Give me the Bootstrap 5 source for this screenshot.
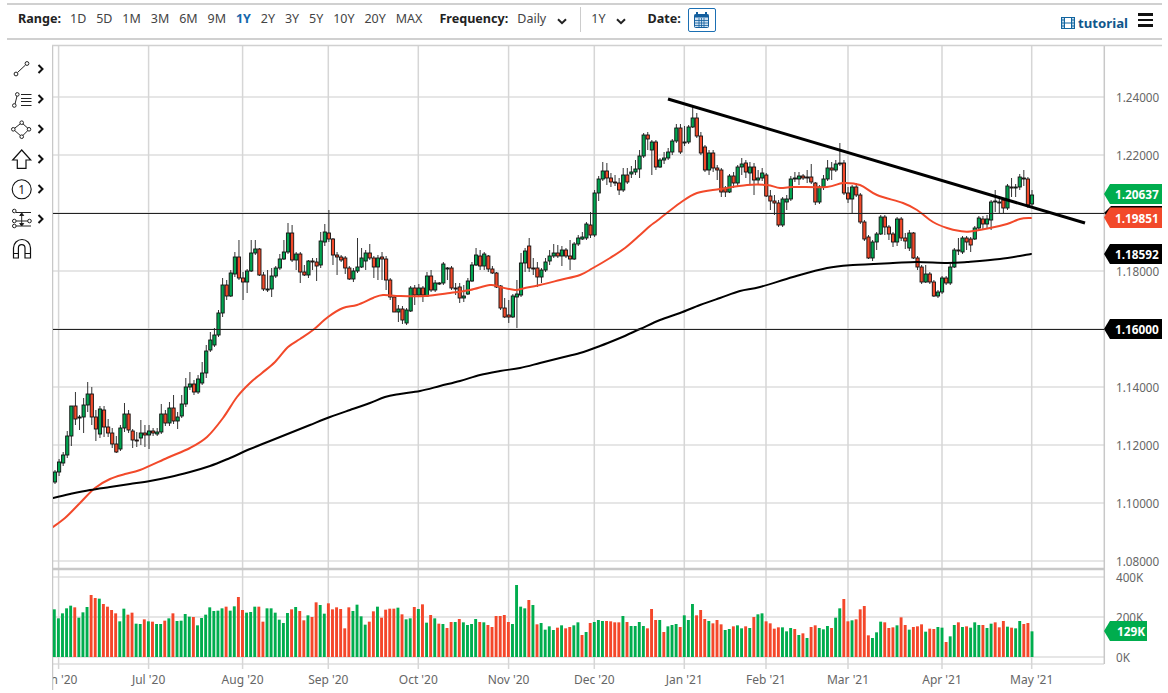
<!DOCTYPE html>
<html lang="en">
<head>
<meta charset="utf-8">
<title>Chart</title>
<link rel="stylesheet" href="https://cdn.jsdelivr.net/npm/bootstrap@5.3.0/dist/css/bootstrap.min.css">
<style>
html,body{background:#fff;margin:0;overflow:hidden;height:693px}
body{font-family:"Noto Sans","Open Sans",sans-serif;color:#333}
.top-strip{margin:3px 6px 0 7px;height:37px;border-top:2px solid #d0d0d0;border-bottom:2px solid #d0d0d0;padding:0 9px 4px 11px;font-size:12.5px;line-height:1}
.lbl{font-weight:700;font-size:12.6px;color:#222}
.rng-list{gap:9.9px;margin-left:9px}
.rng-item{color:#444;text-decoration:none}
.rng-item.is-on{color:#1668ad;font-weight:700}
.freq-lbl{margin-left:17px}
.freq-val{margin-left:9px;color:#444}
.chev{margin-left:11px;display:block;margin-top:3px}
.sep-v{width:1px;height:25px;background:#ccc;margin:0 10px 0 13px}
.date-lbl{margin-left:21px}
.cal-btn{width:28px;height:24px;border:1px solid #1b6fb3;border-radius:2px;margin-left:7px;padding:0;background:#fff;line-height:1}
.tut-link{color:#11578c;font-weight:700;font-size:13.2px;text-decoration:none;margin-top:8px;gap:3px}
.burger{margin-left:10px;width:15px;gap:3px;margin-top:1px}
.burger i{display:block;height:2.4px;background:#111}
.tool-col{width:52px;flex:none;padding-top:10px}
.tool-row{height:30px;padding-left:10px;gap:3px}
.tool-row svg{display:block}
.plot{display:block;flex:none}
.plot text{font-family:"Noto Sans","Open Sans",sans-serif}
.ax{font-size:11.7px;fill:#666;dominant-baseline:central}
.xl{font-size:12px;fill:#666;text-anchor:middle;dominant-baseline:central}
.tg{font-size:11.8px;font-weight:700;fill:#fff;dominant-baseline:central}
</style>
</head>
<body>
<header class="top-strip d-flex align-items-center">
  <span class="lbl">Range:</span>
  <nav class="rng-list d-flex align-items-center">
    <a class="rng-item" href="#">1D</a><a class="rng-item" href="#">5D</a><a class="rng-item" href="#">1M</a><a class="rng-item" href="#">3M</a><a class="rng-item" href="#">6M</a><a class="rng-item" href="#">9M</a><a class="rng-item is-on" href="#">1Y</a><a class="rng-item" href="#">2Y</a><a class="rng-item" href="#">3Y</a><a class="rng-item" href="#">5Y</a><a class="rng-item" href="#">10Y</a><a class="rng-item" href="#">20Y</a><a class="rng-item" href="#">MAX</a>
  </nav>
  <span class="lbl freq-lbl">Frequency:</span>
  <span class="freq-val">Daily</span>
  <svg class="chev" width="10" height="7" viewBox="0 0 10 7"><path d="M1 1.2 5 5.2 9 1.2" fill="none" stroke="#222" stroke-width="2"/></svg>
  <span class="sep-v"></span>
  <span class="freq-val m-0">1Y</span>
  <svg class="chev" width="10" height="7" viewBox="0 0 10 7"><path d="M1 1.2 5 5.2 9 1.2" fill="none" stroke="#222" stroke-width="2"/></svg>
  <span class="lbl date-lbl">Date:</span>
  <button class="cal-btn d-flex align-items-center justify-content-center" type="button" aria-label="Date">
    <svg width="15" height="16" viewBox="0 0 15 16"><rect x=".5" y="2.5" width="14" height="13" rx="1" fill="#cfe1f1" stroke="#145f9e"/><rect x=".5" y="2.5" width="14" height="3" fill="#145f9e"/><path d="M3 0v4M12 0v4" stroke="#145f9e" stroke-width="2"/><path d="M5 6v9M7.5 6v9M10 6v9M1 8.5h13M1 11h13M1 13.5h13" stroke="#145f9e" stroke-width=".8" fill="none"/></svg>
  </button>
  <a class="tut-link ms-auto d-flex align-items-center" href="#">
    <svg width="14" height="12" viewBox="0 0 14 12"><rect x=".5" y=".5" width="13" height="11" fill="#bcd6ea" stroke="#11649f"/><rect x="3.5" y=".5" width="7" height="11" fill="#fff" stroke="#11649f"/><path d="M3.5 6h7M.5 3h3M.5 6h3M.5 9h3M10.5 3h3M10.5 6h3M10.5 9h3" stroke="#11649f"/></svg>
    <span>tutorial</span>
  </a>
  <span class="burger d-flex flex-column"><i></i><i></i><i></i></span>
</header>
<main class="d-flex mt-1">
  <aside class="tool-col d-flex flex-column">
    <div class="tool-row d-flex align-items-center"><svg width="24" height="24" viewBox="0 0 24 24" fill="#fff" stroke="#222"><path d="M7.5 15.5 15.5 8"/><circle cx="6" cy="17" r="1.9"/><circle cx="17" cy="6.5" r="1.9"/></svg><svg width="7" height="10" viewBox="0 0 7 10"><path d="M1.5 1 5.5 5 1.5 9" fill="none" stroke="#111" stroke-width="2"/></svg></div>
    <div class="tool-row d-flex align-items-center"><svg width="24" height="24" viewBox="0 0 24 24" fill="#fff" stroke="#222"><path d="M5 17 7 9M11 7.5h10.5M11 11.5h10.5M11 14.5h10.5M11 18.5h10.5"/><circle cx="4.3" cy="18.5" r="1.8"/><circle cx="7.3" cy="7.4" r="1.8"/></svg><svg width="7" height="10" viewBox="0 0 7 10"><path d="M1.5 1 5.5 5 1.5 9" fill="none" stroke="#111" stroke-width="2"/></svg></div>
    <div class="tool-row d-flex align-items-center"><svg width="24" height="24" viewBox="0 0 24 24" fill="#fff" stroke="#222"><path d="M11.7 5.7 19 12.3 11.7 19.7 3.3 12.3Z"/><circle cx="11.7" cy="5.7" r="1.8"/><circle cx="3.3" cy="12.3" r="1.8"/><circle cx="19" cy="12.3" r="1.8"/><circle cx="11.7" cy="19.7" r="1.8"/></svg><svg width="7" height="10" viewBox="0 0 7 10"><path d="M1.5 1 5.5 5 1.5 9" fill="none" stroke="#111" stroke-width="2"/></svg></div>
    <div class="tool-row d-flex align-items-center"><svg width="24" height="24" viewBox="0 0 24 24" fill="#fff" stroke="#111" stroke-width="1.2"><path d="M11.7 3 2.7 13H7.3V21.3H16V13H20.7Z"/></svg><svg width="7" height="10" viewBox="0 0 7 10"><path d="M1.5 1 5.5 5 1.5 9" fill="none" stroke="#111" stroke-width="2"/></svg></div>
    <div class="tool-row d-flex align-items-center"><svg width="24" height="24" viewBox="0 0 24 24"><circle cx="11.7" cy="12.3" r="9.5" fill="#fff" stroke="#111" stroke-width="1.1"/><text x="11.7" y="16.5" font-size="12" text-anchor="middle" fill="#222">1</text></svg><svg width="7" height="10" viewBox="0 0 7 10"><path d="M1.5 1 5.5 5 1.5 9" fill="none" stroke="#111" stroke-width="2"/></svg></div>
    <div class="tool-row d-flex align-items-center"><svg width="24" height="24" viewBox="0 0 24 24" fill="#fff" stroke="#222"><path d="M6 5.5H21M6 19H21M6 14H18"/><path d="M11.7 7V18"/><path d="M9.7 8.5 11.7 6 13.7 8.5ZM9.7 16.5 11.7 19 13.7 16.5Z" fill="#111"/><circle cx="4.3" cy="4" r="1.8"/><circle cx="4.3" cy="14" r="1.8"/><circle cx="4.3" cy="19" r="1.8"/><circle cx="19.5" cy="14" r="1.8"/></svg><svg width="7" height="10" viewBox="0 0 7 10"><path d="M1.5 1 5.5 5 1.5 9" fill="none" stroke="#111" stroke-width="2"/></svg></div>
    <div class="tool-row d-flex align-items-center"><svg width="24" height="24" viewBox="0 0 24 24" fill="#fff" stroke="#111" stroke-width="1.2"><path d="M3.5 21V11a8.5 8.5 0 0 1 17 0V21H15V11a3.3 3.3 0 0 0-6.6 0V21ZM3.5 16.5H8.4M15 16.5H20.5"/></svg></div>
  </aside>
  <svg class="plot" id="plot" width="1116" height="649" viewBox="52 44 1116 649" xmlns="http://www.w3.org/2000/svg">
    <defs><clipPath id="clipL"><rect x="53" y="44" width="1115" height="649"/></clipPath></defs>
    <g id="gridG"></g>
    <g id="volG"></g>
    <g id="candG" clip-path="url(#clipL)"></g>
    <g id="lineG" clip-path="url(#clipL)"></g>
    <g clip-path="url(#clipL)">
      <text class="xl" x="58.6" y="679">Jun '20</text><text class="xl" x="148.6" y="679">Jul '20</text><text class="xl" x="242.6" y="679">Aug '20</text><text class="xl" x="328.3" y="679">Sep '20</text><text class="xl" x="418.3" y="679">Oct '20</text><text class="xl" x="508.6" y="679">Nov '20</text><text class="xl" x="594.3" y="679">Dec '20</text><text class="xl" x="684.3" y="679">Jan '21</text><text class="xl" x="766" y="679">Feb '21</text><text class="xl" x="848" y="679">Mar '21</text><text class="xl" x="942" y="679">Apr '21</text><text class="xl" x="1031.7" y="679">May '21</text>
    </g>
    <text class="ax" x="1116" y="97">1.24000</text><text class="ax" x="1116" y="155">1.22000</text><text class="ax" x="1116" y="271">1.18000</text><text class="ax" x="1116" y="387">1.14000</text><text class="ax" x="1116" y="445">1.12000</text><text class="ax" x="1116" y="503">1.10000</text><text class="ax" x="1116" y="561">1.08000</text><text class="ax" x="1116" y="577">400K</text><text class="ax" x="1116" y="617">200K</text><text class="ax" x="1116" y="657">0K</text>
    <path d="M1104 213 1111 206H1162V220H1111Z" fill="#000"/>
    <path d="M1104 217.500 1110 207.500H1162V228H1110Z" fill="#f2492a"/>
    <path d="M1104 194 1110 184H1162V204H1110Z" fill="#00ad4e"/>
    <path d="M1104 254 1110 244H1162V264H1110Z" fill="#000"/>
    <path d="M1104 329 1110 319H1162V339H1110Z" fill="#000"/>
    <path d="M1104 631 1110 621H1147V641H1110Z" fill="#00ad4e"/>
    <text class="tg" x="1115" y="194">1.20637</text><text class="tg" x="1115" y="217.500">1.19851</text><text class="tg" x="1115" y="254">1.18592</text><text class="tg" x="1115" y="329">1.16000</text><text class="tg" x="1117" y="631">129K</text>
  </svg>
</main>
<script src="https://cdn.jsdelivr.net/npm/bootstrap@5.3.0/dist/js/bootstrap.bundle.min.js"></script>
<script>
(function(){
var G='#00a651',R='#f2492a',VG='#00ad4e',VR='#f4472a';
var grid='';
[97,155,213,271,329,387,445,503,561,577,617,657,664].forEach(function(y){grid+='<line x1="53" x2="1104" y1="'+y+'" y2="'+y+'" stroke="#e6e6e6" stroke-width="2"/>';});
[58.6,148.6,242.6,328.3,418.3,508.6,594.3,684.3,766,848,942,1031.7].forEach(function(x){grid+='<line x1="'+x+'" x2="'+x+'" y1="45" y2="669" stroke="#d6d6d6" stroke-width="1.5"/>';});
grid+='<line x1="52.500" x2="52.500" y1="45" y2="690" stroke="#c8c8c8" stroke-width="1.5"/>';
grid+='<line x1="1104.300" x2="1104.300" y1="45" y2="664" stroke="#c8c8c8" stroke-width="1.5"/>';
grid+='<line x1="52" x2="1162" y1="45.500" y2="45.500" stroke="#d0d0d0" stroke-width="1.5"/>';
grid+='<line x1="52" x2="1104" y1="569" y2="569" stroke="#c8c8c8" stroke-width="2.5"/>';
document.getElementById('gridG').innerHTML=grid;

var c="g472-482/470,484 g462-472/459,476 g455-463/452,466 g436-455/431,458 g406-436/406,446 r406-419/392,425 g417-418/415,430 g405-417/398,433 g394-405/382,412 r394-417/387,425 r417-429/410,441 g409-434/406,438 r410-427/406,437 r427-433/419,437 r433-444/428,448 r444-452/436,453 g428-449/425,451 g414-428/403,432 r414-430/410,433 r431-440/429,448 r440-441/432,447 g433-438/420,445 r433-435/425,447 g431-435/425,449 r431-433/428,436 g432-434/428,436 g414-432/404,434 r414-423/410,426 g408-423/402,426 r408-421/395,424 g417-421/412,429 g404-416/395,418 g387-404/378,407 g384-387/372,390 r384-392/380,395 g379-392/375,394 g373-383/362,385 g351-373/345,378 g340-350/332,352 g335-345/328,347 "+
"g313-335/310,337 g285-313/278,317 r285-296/280,300 g273-296/270,297 g257-274/252,277 r257-278/240,280 r278-282/272,300 g271-282/269,293 g253-271/240,272 g249-253/240,255 r249-275/248,276 r275-289/272,291 g289-290/270,292 g276-289/268,297 g268-276/266,278 g259-268/254,270 g252-259/240,260 g233-252/223,254 r233-260/225,262 g254-260/252,270 r254-272/252,283 r272-275/265,276 g261-275/260,278 r261-262/258,270 r262-266/258,281 g241-265/232,268 g232-242/224,246 r233-239/210,242 r239-255/238,265 r255-257/252,275 r257-260/255,262 r258-268/256,274 r268-279/266,280 g271-279/268,282 g267-271/238,273 g258-267/248,268 g253-261/250,270 r253-258/244,260 r258-267/256,278 g258-267/255,280 r257-259/252,280 r259-280/256,290 r280-297/278,300 r297-312/295,312 g309-312/305,322 "+
"r309-320/306,324 g310-323/308,325 g288-311/286,312 r288-295/285,305 g288-295/284,297 r288-295/286,302 g276-296/272,297 r276-290/270,292 g283-290/280,292 g283-284/282,285 g264-283/262,285 g268-269/267,280 r268-288/266,290 r288-289/283,295 r287-298/283,303 g296-298/285,302 g281-294/278,295 g265-281/262,282 g255-265/248,266 r256-266/250,270 g254-266/252,270 r256-269/255,272 r269-273/266,274 r273-287/272,288 r286-308/285,310 r308-317/298,318 r315-317/300,323 g296-317/294,318 g294-297/280,328 g263-295/253,297 g251-263/248,272 r246-268/238,272 r268-269/258,275 r268-277/262,287 g270-277/268,283 g262-270/258,272 g256-261/250,265 g253-256/244,258 r253-256/245,258 g250-256/246,266 r250-256/248,258 r256-259/240,270 g244-259/242,260 g238-244/235,246 g237-239/232,240 g224-238/222,240 r225-235/212,238 "+
"g193-235/190,237 g179-193/176,201 g171-179/162,181 r171-178/163,185 r178-182/173,187 r182-183/175,186 r183-190/178,195 g175-190/168,192 r175-182/168,184 g172-174/166,178 g169-172/160,175 g156-169/150,178 g135-156/133,158 r135-139/132,150 g142-150/140,175 r142-167/140,170 g160-167/158,168 g158-160/152,164 g152-158/148,160 g141-152/139,155 g128-141/124,143 r128-152/124,154 g142-143/126,146 g127-142/125,144 g118-127/106,128 r118-136/113,138 r136-153/132,155 r147-170/145,172 g153-170/150,175 r153-168/150,172 r168-170/165,180 r170-192/168,197 r188-192/186,197 g176-192/174,193 r176-183/172,188 g167-183/165,186 g164-167/158,175 r163-172/160,178 g167-173/162,184 r167-180/163,195 g178-180/170,185 g173-178/168,181 r175-196/173,197 r196-201/190,210 r201-203/195,215 r203-225/200,227 g199-225/197,227 "+
"g199-202/195,210 g179-199/176,201 g178-179/172,182 g176-179/172,185 r176-178/174,180 r177-178/170,183 r177-182/164,184 r183-202/182,205 g187-202/185,204 g179-187/175,190 g168-179/160,181 r168-170/162,180 g164-170/160,172 g163-164/143,166 r163-193/160,195 r193-199/187,203 g187-199/185,214 r187-195/183,197 r195-222/193,224 r222-239/220,241 r237-258/235,259 g242-258/240,261 g234-242/232,250 g217-234/215,235 r217-227/215,235 r227-234/225,240 r234-242/232,247 g219-242/217,246 r219-238/217,241 r238-241/233,249 g233-248/230,251 r233-258/232,259 r258-267/256,270 r267-282/265,284 g274-282/265,283 r274-282/272,284 r282-296/280,297 g292-296/290,298 g278-292/276,294 r278-283/276,285 g267-283/264,285 g250-267/248,268 r250-251/238,255 "+
"g238-252/236,254 r238-242/236,250 r239-245/237,252 g228-239/226,240 g218-228/216,230 r219-224/216,230 g219-224/215,228 g202-220/200,230 g201-202/190,212 g202-203/196,214 r200-208/198,214 g186-208/184,210 r187-188/178,197 g187-188/184,197 g177-187/174,190 r178-179/170,186 r179-205/177,208 g195-204/190,206";
var toks=c.split(' '),n=toks.length,sp=(1032-55)/(n-1),h='',b='';
toks.forEach(function(t,i){
  var m=t.match(/^([gr])(\d+)-(\d+)\/(\d+),(\d+)$/),x=55+sp*i;
  var top=+m[2],bot=+m[3],wt=+m[4],wb=+m[5];
  h+='<line x1="'+x+'" x2="'+x+'" y1="'+wt+'" y2="'+wb+'" stroke="#333" stroke-width="1"/>';
  b+='<rect x="'+(x-1.6)+'" y="'+top+'" width="3.2" height="'+(bot-top)+'" fill="'+(m[1]=='g'?G:R)+'" stroke="#111" stroke-width=".9"/>';
});
document.getElementById('candG').innerHTML=h+b;

var a=[[178,'g'],[205,'g'],[190,'g'],[175,'g'],[167,'g'],[172,'r'],[203,'g'],[187,'g'],[171,'g'],[135,'r'],[144,'r'],[146,'g'],[162,'r'],[170,'r'],[180,'r'],[190,'r'],[214,'g'],[176,'g'],[194,'r'],[188,'r'],[221,'g'],[222,'g'],[208,'r'],[214,'g'],[215,'r'],[222,'g'],[222,'g'],[212,'r'],[205,'g'],[190,'r'],[213,'g'],[212,'g'],[192,'g'],[200,'g'],[201,'r'],[226,'g'],[204,'g'],[194,'g'],[172,'g'],[183,'g'],[182,'g'],[175,'g'],[170,'r'],[182,'g'],[169,'g'],[141,'r'],[180,'r'],[188,'g'],[186,'g'],[170,'g'],[170,'r'],[215,'r'],[175,'g'],[175,'g'],[188,'g'],[209,'g'],[219,'g'],[189,'g'],[178,'r'],[171,'g'],[183,'r'],[211,'r'],[196,'g'],[201,'r'],[157,'r'],[165,'g'],[191,'g'],[160,'r'],[178,'r'],[172,'r'],[177,'r'],[235,'r'],[172,'r'],[183,'g'],[164,'g'],[199,'g'],[224,'g'],[215,'r'],[184,'r'],[170,'g'],[203,'r'],[179,'r'],[176,'r'],[176,'r'],[173,'g']];
var v1="103r 118g 115g 81r 87g 73r 128g 105r 115g 131r 132g 144r 126r 126g 117r 127g 135g 132g 117g 126r 127g 135r 141r 108r 108r 105r 126r 132g 15g 80g 85g 60r 75g 133r 129g 149g 139g 150g 143r 136g 145r 141r 136g 127g 165r 156g 129r 126g 120g 123g 123r 124r 127r 127r 108g 126r 138g 138g 126g 138g 145r 87r 120r 120g 156r 139g 135g 132g 141r 106g 120g 72g "+
"106r 90r 117r 123g 130r 120r 133r 150g 147g 139r 136g 145g 139r 144g 111r 103g 100g 124r 130r 146r 142r 142g 154g 144g 147r 165g 160r 174g 141r 136r 144g 148g 138g 144r 113g 85g 57r 124r 121g 118r 88r 78r 166r 174g 157g 125g 127r 144r 142r 136g 112r 135r 149g 141r 139r 133r 155g 146r 147r 141g 143g 186r 169g 135g 127r 141g 139r 143g 127g 135g 135r 144g";
var v2="221g 217r 232r 213r 230g 233r 235g 213g 222r 219r 244g";
var vols=a.map(function(p){return [550+p[0]/3,p[1]];});
v1.split(' ').forEach(function(s){vols.push([580+parseInt(s)/3,s.slice(-1)]);});
v2.split(' ').forEach(function(s){vols.push([550+parseInt(s)/3,s.slice(-1)]);});
var sv=(1032-54.3)/(vols.length-1),vh='';
vols.forEach(function(p,i){var x=54.3+sv*i;vh+='<rect x="'+(x-1.45)+'" y="'+p[0]+'" width="2.9" height="'+(657-p[0])+'" fill="'+(p[1]=='g'?VG:VR)+'"/>';});
document.getElementById('volG').innerHTML=vh;

var red=[[53,527],[65,518],[80,503],[95,488],[110,479],[125,474],[140,470],[167,458],[190,448],[207,437],[223,418],[237,397],[250,383],[262,373],[275,362],[288,347],[300,339],[313,330],[328,317],[343,308],[357,305],[373,298],[383,295],[400,296],[425,296],[450,293],[470,290],[490,285],[500,287],[515,290],[525,288],[540,285],[560,280],[580,275],[593,268],[610,258],[625,248],[640,235],[650,226],[658,220],[680,203],[697,193],[720,189],[747,185],[767,185],[780,188],[793,187],[827,187],[843,183],[860,185],[877,195],[903,203],[917,210],[933,222],[947,228],[960,231],[970,231.500],[990,228],[1007,224],[1020,219],[1031,218]];
var blk=[[53,498],[70,494],[90,490],[110,487],[130,484],[150,481],[170,477],[190,472],[210,466],[230,458],[250,449],[270,441],[290,433],[310,425],[330,417],[350,410],[370,403],[385,397],[400,394],[420,391],[440,386],[460,381],[480,375],[500,371],[520,368],[540,363],[560,358],[580,353],[600,346],[620,338],[640,329],[660,320],[680,313],[700,305],[720,298],[740,291],[760,287],[793,277],[827,268],[853,265],[893,263],[917,262],[947,263],[967,262],[1000,259],[1031,254]];
function pl(a,col,w){
  var d='M'+a[0][0]+' '+a[0][1];
  for(var i=0;i<a.length-1;i++){
    var p0=a[i-1]||a[i],p1=a[i],p2=a[i+1],p3=a[i+2]||p2;
    d+=' C'+(p1[0]+(p2[0]-p0[0])/6).toFixed(1)+' '+(p1[1]+(p2[1]-p0[1])/6).toFixed(1)+' '+(p2[0]-(p3[0]-p1[0])/6).toFixed(1)+' '+(p2[1]-(p3[1]-p1[1])/6).toFixed(1)+' '+p2[0]+' '+p2[1];
  }
  return '<path fill="none" stroke-linecap="round" stroke="'+col+'" stroke-width="'+w+'" d="'+d+'"/>';
}
var l=pl(red,'#f2492a',2)+pl(blk,'#000',2);
l+='<line x1="53" x2="1104" y1="213.500" y2="213.500" stroke="#222" stroke-width="1"/>';
l+='<line x1="53" x2="1104" y1="329.500" y2="329.500" stroke="#222" stroke-width="1"/>';
l+='<line x1="668" y1="99" x2="1085" y2="223" stroke="#000" stroke-width="3"/>';
document.getElementById('lineG').innerHTML=l;
})();
</script>
</body>
</html>
